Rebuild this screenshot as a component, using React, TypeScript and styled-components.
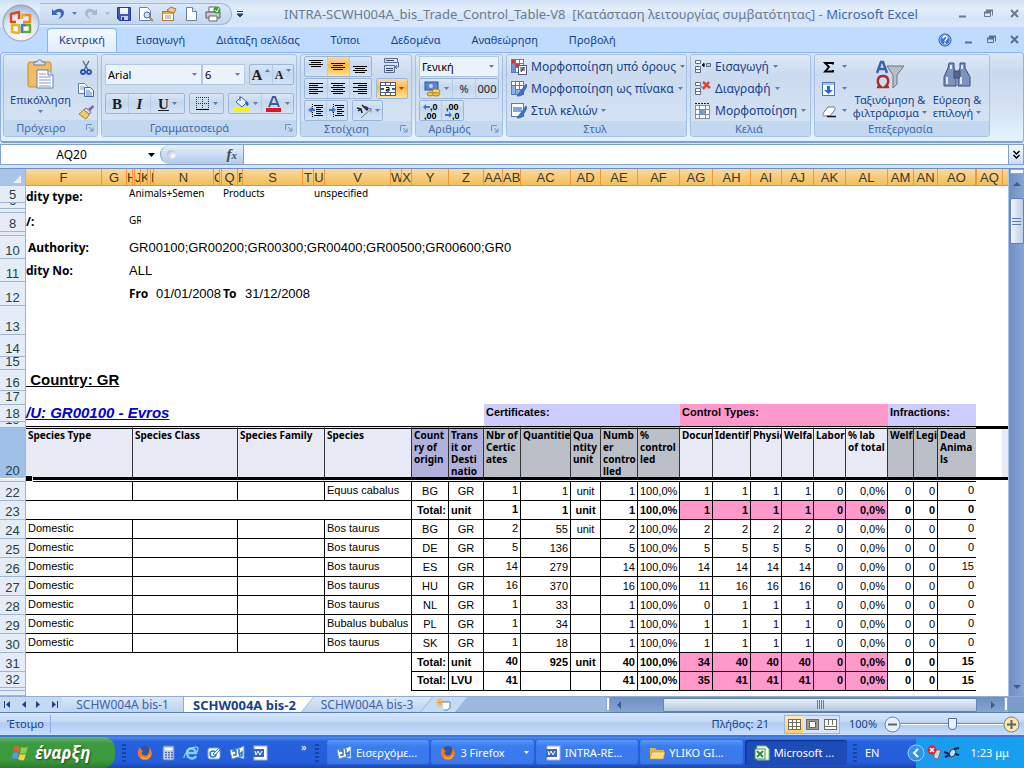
import React from "react";
import styled, { createGlobalStyle, css } from "styled-components";

const UI = `"Noto Sans", "Open Sans", sans-serif`;
const SHEET = `"Liberation Sans", Arial, sans-serif`;

const Global = createGlobalStyle`
  * { box-sizing: border-box; }
  body { margin: 0; background: #fff; font-family: ${UI}; font-size: 12px; overflow-x: hidden; }
  button { font: inherit; color: inherit; border: 0; padding: 0; margin: 0; background: none; }
  input, select { font: inherit; color: inherit; margin: 0; border-radius: 0; }
  svg { display: block; flex: none; }
`;

const Page = styled.div`
  display: flex;
  flex-direction: column;
  position: relative;
`;

/* ---------- title bar ---------- */

const TitleBar = styled.header`
  display: flex;
  align-items: center;
  height: 27px;
  padding: 0 2px 0 40px;
  background: linear-gradient(#cfe0f5, #e3eefb 30%, #d3e3f7 70%, #dcebfb);
  color: #3c66a8;
`;
const OfficeButton = styled.button`
  position: absolute;
  z-index: 2;
  left: 2px;
  top: 4px;
  width: 38px;
  height: 38px;
`;
const QuickBar = styled.div`
  display: flex;
  flex: none;
  align-items: center;
  gap: 7px;
  width: 192px;
  height: 22px;
  padding-left: 11px;
  border: 1px solid #9db8dc;
  border-left: 0;
  border-radius: 0 11px 11px 0;
  background: linear-gradient(#dbe8f8, #c4d7ef);
`;
const QuickButton = styled.button`
  display: flex;
  align-items: center;
  justify-content: center;
  height: 18px;
`;
const TitleText = styled.h1`
  flex: 1;
  min-width: 0;
  margin: 0;
  font-size: 13px;
  line-height: 20px;
  font-weight: 400;
  text-align: center;
  white-space: pre;
  color: #6c7a92;
  overflow: hidden;
`;
const AppName = styled.span`
  color: #3f69ab;
`;
const WindowButtons = styled.div`
  display: flex;
  gap: 10px;
`;
const WinButton = styled.button`
  display: grid;
  place-items: center;
  width: 16px;
  height: 16px;
`;

/* ---------- ribbon tabs ---------- */

const TabBar = styled.nav`
  display: flex;
  align-items: flex-end;
  justify-content: space-between;
  height: 25px;
  padding: 0 2px 0 47px;
  background: #bfdbff;
`;
const TabList = styled.div`
  display: flex;
  gap: 7px;
`;
const Tab = styled.button<{ $active?: boolean }>`
  height: 24px;
  padding: 0 11px 2px;
  border: 1px solid transparent;
  border-bottom: 0;
  border-radius: 4px 4px 0 0;
  font-size: 11px;
  line-height: 20px;
  color: #15428b;
  ${(p) =>
    p.$active &&
    css`
      border-color: #8db2e3;
      background: linear-gradient(#f4f9ff, #e1ecfa);
    `}
`;
const TabTools = styled.div`
  display: flex;
  align-items: center;
  gap: 7px;
  height: 25px;
`;

/* ---------- ribbon ---------- */

const Ribbon = styled.section`
  display: flex;
  gap: 3px;
  height: 91px;
  padding: 1px 2px 4px;
  border: 1px solid #8db2e3;
  border-bottom: 2px solid #7ea1d0;
  border-radius: 3px;
  background: linear-gradient(#dbe6f4, #c9d9ed 22%, #d3e1f2 60%, #e3f4ff);
`;
const Group = styled.div<{ $w: number }>`
  display: flex;
  flex-direction: column;
  flex: none;
  width: ${(p) => p.$w}px;
  border: 1px solid #a4c0e4;
  border-radius: 3px;
  background: linear-gradient(#dee9f6, #cbdaee 25%, #d8e5f5);
  overflow: hidden;
`;
const GroupBody = styled.div`
  display: flex;
  flex: 1;
  gap: 4px;
  padding: 1px 3px 0;
`;
const GroupLabel = styled.div`
  display: flex;
  align-items: center;
  gap: 8px;
  height: 16px;
  padding-right: 3px;
  background: #c2d8f1;
  font-size: 11px;
  line-height: 16px;
  color: #3e6aaa;
`;
const GroupName = styled.span`
  flex: 1;
  text-align: center;
`;
const Stack = styled.div<{ $gap?: number; $top?: number; $w?: number }>`
  display: flex;
  flex-direction: column;
  gap: ${(p) => p.$gap ?? 1}px;
  padding-top: ${(p) => p.$top ?? 0}px;
  ${(p) => p.$w && `width: ${p.$w}px;`}
`;
const Line = styled.div<{ $gap?: number }>`
  display: flex;
  gap: ${(p) => p.$gap ?? 4}px;
`;
const ButtonSet = styled.div`
  display: flex;
  height: 21px;
  border: 1px solid #9ab6dc;
  border-radius: 2px;
  background: linear-gradient(#d9e6f5, #c6d8ee 45%, #d3e2f3);
`;
const Tool = styled.button<{ $w?: number; $on?: boolean }>`
  display: flex;
  align-items: center;
  justify-content: center;
  gap: 3px;
  width: ${(p) => p.$w ?? 22}px;
  height: 19px;
  color: #1a1d26;
  font-size: 11px;
  ${(p) => p.$on && "background: linear-gradient(#fdd99b, #ffb74c 45%, #ffe58a);"}
  & + & {
    border-left: 1px solid #b5cbe7;
  }
`;
const Letter = styled.span<{ $size?: number; $italic?: boolean; $under?: boolean }>`
  font-family: "Liberation Serif", serif;
  font-weight: 700;
  font-size: ${(p) => p.$size ?? 15}px;
  line-height: 18px;
  ${(p) => p.$italic && "font-style: italic;"}
  ${(p) => p.$under && "text-decoration: underline;"}
`;
const SizeMark = styled.span`
  align-self: flex-start;
  padding-top: 4px;
`;
const BigTool = styled.button<{ $w: number }>`
  display: flex;
  flex-direction: column;
  align-items: center;
  width: ${(p) => p.$w}px;
  padding-top: 3px;
  font-size: 11px;
  line-height: 13px;
  color: #15428b;
  white-space: nowrap;
`;
const BigText = styled.span`
  padding: 3px 0 0;
`;
const CaretPad = styled.span`
  padding-top: 4px;
`;
const TextTool = styled.button`
  display: flex;
  align-items: center;
  gap: 4px;
  height: 21px;
  font-size: 12px;
  line-height: 20px;
  color: #15428b;
  white-space: nowrap;
`;
const SmallTool = styled.button`
  display: flex;
  align-items: center;
  gap: 6px;
  height: 21px;
  padding-left: 4px;
`;
const SelectBox = styled.label<{ $w: number }>`
  display: grid;
  align-items: center;
  width: ${(p) => p.$w}px;
  height: 21px;
  border: 1px solid #b3c9e6;
  background: #eaf2fb;
  & > * {
    grid-area: 1 / 1;
  }
  & > svg {
    justify-self: end;
    margin-right: 4px;
    pointer-events: none;
  }
`;
const Select = styled.select`
  appearance: none;
  width: 100%;
  height: 19px;
  padding: 0 2px;
  border: 0;
  background: none;
  font-size: 11px;
  line-height: 18px;
  color: #000;
`;

/* ---------- formula bar ---------- */

const FormulaBar = styled.div`
  display: flex;
  height: 26px;
  padding: 1px 0 3px;
  border-bottom: 1px solid #6a8fc5;
  background: #d5e4f6;
`;
const NameBox = styled.input`
  width: 142px;
  border: 1px solid #7f9fcc;
  border-right: 0;
  background: #fff;
  text-align: center;
  font-size: 12px;
  padding: 0;
`;
const NameArrow = styled.button`
  display: grid;
  place-items: center;
  width: 18px;
  border: solid #7f9fcc;
  border-width: 1px 0;
  background: #fff;
`;
const FunctionPill = styled.div`
  display: flex;
  align-items: center;
  justify-content: space-between;
  width: 84px;
  padding: 0 6px;
  border: solid #7f9fcc;
  border-width: 0 1px;
  border-radius: 11px 0 0 11px;
  background: linear-gradient(#e6effa, #b3caea);
`;
const PillDot = styled.span`
  width: 9px;
  height: 9px;
  border-radius: 5px;
  background: radial-gradient(circle at 6px 6px, #fff, #9ab0d0);
`;
const FxButton = styled.button`
  font-family: "Liberation Serif", serif;
  font-style: italic;
  font-weight: 700;
  font-size: 15px;
  line-height: 18px;
  color: #444b58;
  & > small {
    font-size: 11px;
  }
`;
const PillWrap = styled.div`
  display: flex;
  border: solid #7f9fcc;
  border-width: 1px 0;
  background: #fff;
`;
const FormulaInput = styled.input`
  flex: 1;
  min-width: 0;
  border: solid #7f9fcc;
  border-width: 1px 0;
  background: #fff;
`;
const ExpandButton = styled.button`
  display: grid;
  place-items: center;
  width: 16px;
  border: 1px solid #7f9fcc;
  background: linear-gradient(#f4f9ff, #c9dcf4);
`;

/* ---------- work sheet ---------- */

const Workbook = styled.main`
  display: flex;
`;
const Grid = styled.div`
  flex: 1;
  min-width: 0;
  overflow: hidden;
`;
const ColumnHeads = styled.div`
  display: flex;
  height: 17px;
  background: linear-gradient(#f9d99f, #f4bd5b);
  border-bottom: 1px solid #ef8f35;
`;
const SelectAll = styled.button`
  display: flex;
  align-items: flex-end;
  justify-content: flex-end;
  flex: none;
  width: 26px;
  height: 17px;
  padding: 0 4px 3px 0;
  border-right: 1px solid #9eb6ce;
  background: #a9c4e9;
`;
const ColumnHead = styled.div<{ $w: number }>`
  display: flex;
  flex: none;
  justify-content: safe center;
  width: ${(p) => p.$w}px;
  border-right: 1px solid #f29536;
  overflow: hidden;
  font-family: ${SHEET};
  font-size: 13px;
  line-height: 17px;
  color: #3d3822;
`;
const SheetArea = styled.div`
  display: flex;
`;
const RowHeads = styled.div`
  flex: none;
  width: 26px;
  border-right: 1px solid #9eb6ce;
  background: #e4ecf7;
`;
const RowHead = styled.div<{ $h: number; $on?: boolean }>`
  display: flex;
  align-items: flex-end;
  justify-content: center;
  height: ${(p) => p.$h}px;
  border-bottom: 1px solid ${(p) => (p.$on ? "#fff" : "#9eb6ce")};
  background: ${(p) => (p.$on ? "#9fc0e8" : "none")};
  overflow: hidden;
  font-family: ${SHEET};
  font-size: 13px;
  line-height: 14px;
  color: #27413e;
`;
const Cells = styled.div`
  flex: 1;
  min-width: 0;
`;
const NoteRow = styled.div<{ $h: number }>`
  display: flex;
  align-items: center;
  height: ${(p) => p.$h}px;
`;
const NoteLabel = styled.div<{ $indent?: number }>`
  flex: none;
  width: 103px;
  padding-left: ${(p) => p.$indent ?? 0}px;
  overflow: hidden;
  white-space: nowrap;
  font-weight: 700;
  font-size: 12px;
  line-height: 18px;
`;
const NoteValue = styled.div<{ $w?: number; $small?: boolean; $bold?: boolean }>`
  flex: none;
  ${(p) => p.$w && `width: ${p.$w}px;`}
  overflow: hidden;
  white-space: nowrap;
  ${(p) =>
    p.$small
      ? `align-self: flex-start; font-size: 10px; line-height: 14px;`
      : `font-size: 13px; line-height: 18px; font-family: ${SHEET};`}
  ${(p) => p.$bold && `font-weight: 700; font-family: ${UI}; font-size: 12px;`}
`;
const Gap = styled.div<{ $h: number }>`
  height: ${(p) => p.$h}px;
`;
const CountryTitle = styled.h2`
  margin: 0;
  height: 20px;
  white-space: pre;
  font: 700 15px/20px ${SHEET};
  text-decoration: underline;
`;
const BandRow = styled.div`
  display: flex;
  height: 22px;
`;
const UnitCell = styled.div`
  flex: none;
  width: 458px;
`;
const UnitLink = styled.a`
  font: italic 700 15px/18px ${SHEET};
  color: #0000d8;
  text-decoration: underline;
`;
const Band = styled.div<{ $w: number; $pink?: boolean }>`
  flex: none;
  width: ${(p) => p.$w}px;
  padding-left: 2px;
  background: ${(p) => (p.$pink ? "#ff99cc" : "#ccccff")};
  font: 700 11px/16px ${SHEET};
`;
const TableLine = styled.div`
  display: flex;
  position: relative;
`;
const FillHandle = styled.span`
  position: absolute;
  left: 0;
  top: 49px;
  width: 7px;
  height: 7px;
  border: solid #fff;
  border-width: 1px 1px 1px 0;
  background: #000;
`;
const DataTable = styled.table`
  flex: none;
  width: 950px;
  table-layout: fixed;
  border-collapse: separate;
  border-spacing: 0;
`;
const HeadCell = styled.th<{ $tone: string }>`
  height: 54px;
  padding: 0 0 0 2px;
  border-top: 3px double #000;
  border-bottom: 3px solid #000;
  border-right: 1px solid #333;
  background: ${(p) => p.$tone};
  vertical-align: top;
  text-align: left;
  white-space: pre;
  overflow: hidden;
  font-weight: 700;
  font-size: 10px;
  line-height: 12px;
  &:last-child {
    border-right: 0;
  }
`;
const ThinCell = styled.td`
  height: 2px;
  padding: 0;
  border-bottom: 1px solid #000;
`;
type Align = "left" | "center" | "right";
const Cell = styled.td<{ $align?: Align; $bold?: boolean; $pink?: boolean; $raise?: boolean; $open?: boolean }>`
  height: 19px;
  padding: ${(p) => (p.$raise ? "0 2px 2px" : "0 2px")};
  border-right: 1px solid #000;
  border-bottom: ${(p) => (p.$open ? "0" : "1px solid #000")};
  background: ${(p) => (p.$pink ? "#ff99cc" : "#fff")};
  text-align: ${(p) => p.$align ?? "right"};
  font: ${(p) => (p.$bold ? 700 : 400)} 11px/16px ${SHEET};
  white-space: nowrap;
  &:last-child {
    border-right: 0;
  }
`;
const Beyond = styled.div`
  flex: 1;
  height: 54px;
  border: solid #000;
  border-width: 3px 0;
  background: linear-gradient(90deg, #fff 26px, #e8ebf5 26px);
`;
const VScroll = styled.div`
  display: flex;
  flex: none;
  flex-direction: column;
  align-items: center;
  width: 16px;
  border-left: 1px solid #a9c4e9;
  background: linear-gradient(90deg, #6d8fc2, #86a5d2);
`;
const Splitter = styled.span<{ $tall?: boolean }>`
  flex: none;
  width: ${(p) => (p.$tall ? 4 : 14)}px;
  height: ${(p) => (p.$tall ? 14 : 5)}px;
  border: 1px solid #8aa7d4;
  background: #f4f9ff;
`;
const VThumb = styled.div`
  display: grid;
  place-items: center;
  width: 14px;
  height: 46px;
  margin: 5px 0 auto;
  border: 1px solid #6482b3;
  border-radius: 2px;
  background: linear-gradient(90deg, #f0f5fc, #bccde6);
`;
const ArrowPad = styled.span`
  padding: 6px 0 5px;
`;

/* ---------- sheet tabs ---------- */

const SheetBar = styled.div`
  display: flex;
  align-items: stretch;
  height: 16px;
  border-top: 1px solid #8fabd6;
  background: #9db8de;
`;
const SheetNav = styled.div`
  display: flex;
  flex: none;
  align-items: center;
  justify-content: space-around;
  width: 62px;
  background: #c5d9f3;
`;
const SheetTab = styled.button<{ $w: number; $active?: boolean; $slant?: boolean }>`
  flex: none;
  width: ${(p) => p.$w}px;
  font-size: 12px;
  line-height: 14px;
  color: #3c63a5;
  background: linear-gradient(#dbe8f8, #bcd2f0);
  border-right: 1px solid #8fabd6;
  ${(p) =>
    p.$slant &&
    css`
      margin-left: -11px;
      border: 0;
      clip-path: polygon(12px 0, 100% 0, calc(100% - 12px) 100%, 0 100%);
    `}
  ${(p) =>
    p.$active &&
    css`
      padding-right: 8px;
      border: 0;
      font-size: 13px;
      color: #15428b;
      font-weight: 700;
      background: #fff;
      clip-path: polygon(0 0, 100% 0, calc(100% - 12px) 100%, 0 100%);
    `}
`;
const NewTab = styled.button`
  display: grid;
  place-items: center;
  flex: none;
  width: 46px;
  margin-left: -11px;
  background: #c7daf4;
  clip-path: polygon(12px 0, 100% 0, calc(100% - 12px) 100%, 0 100%);
`;
const TabSpace = styled.div`
  flex: 1;
`;
const HScroll = styled.div`
  display: flex;
  flex: none;
  align-items: center;
  width: 394px;
  padding-left: 5px;
  background: linear-gradient(#6d8fc2, #86a5d2);
`;
const HThumb = styled.div`
  display: grid;
  place-items: center;
  width: 314px;
  height: 14px;
  margin: 0 12px 0 40px;
  border: 1px solid #6482b3;
  border-radius: 2px;
  background: linear-gradient(#e8eff9, #b4c7e2);
`;
const ScrollCorner = styled.div`
  width: 16px;
  background: #7c9ccd;
`;

/* ---------- status bar ---------- */

const StatusBar = styled.footer`
  display: flex;
  align-items: center;
  height: 23px;
  padding: 0 4px 0 7px;
  border-top: 1px solid #567db0;
  background: linear-gradient(#d7e6f9, #c3d9f7 40%, #b0cbef 45%, #c9defa);
  font-size: 11px;
  line-height: 18px;
  color: #15428b;
`;
const ReadyText = styled.span`
  width: 44px;
  border-right: 1px solid #8fb0de;
`;
const CountText = styled.span`
  flex: 1;
  padding-right: 9px;
  text-align: right;
`;
const ViewButtons = styled.div`
  display: flex;
  margin: 0 9px 0 6px;
  border: 1px solid #9ab6dc;
`;
const ViewButton = styled.button<{ $on?: boolean }>`
  display: grid;
  place-items: center;
  width: 18px;
  height: 17px;
  background: ${(p) => (p.$on ? "linear-gradient(#ffe9b5, #ffcb66)" : "#d5e4f7")};
`;
const RoundButton = styled.button`
  display: grid;
  place-items: center;
`;
const Zoom = styled.input`
  appearance: none;
  width: 102px;
  height: 18px;
  background: linear-gradient(#0000 8px, #6f8fbf 8px, #6f8fbf 9px, #fff 9px, #fff 10px, #0000 10px);
  &::-webkit-slider-thumb {
    appearance: none;
    width: 9px;
    height: 12px;
    border: 1px solid #4f6f9f;
    border-radius: 1px 1px 5px 5px;
    background: #e8f0fb;
  }
`;
const ZoomText = styled.span`
  width: 35px;
`;

/* ---------- task bar ---------- */

const TaskBar = styled.footer`
  display: flex;
  align-items: stretch;
  height: 33px;
  border-top: 2px solid #3a78e0;
  background: linear-gradient(#4a8cf2, #2760dc 15%, #245edb 80%, #1c47b4);
  color: #fff;
  font-size: 11px;
  line-height: 16px;
`;
const StartButton = styled.button`
  display: flex;
  flex: none;
  align-items: center;
  gap: 6px;
  width: 115px;
  padding-left: 11px;
  border-radius: 0 12px 12px 0;
  background: linear-gradient(#67b767, #3f9a42 20%, #3a9a3c 75%, #2b7a2e);
  font-style: italic;
  font-weight: 700;
  font-size: 17px;
  line-height: 24px;
  text-shadow: 1px 1px 2px #1c4a1c;
`;
const Grip = styled.span`
  flex: none;
  align-self: center;
  width: 4px;
  height: 18px;
  background: repeating-linear-gradient(#1a45a8 0 2px, #0000 2px 4px);
`;
const Gutter = styled.div`
  display: flex;
  justify-content: flex-end;
  width: 14px;
  padding-right: 3px;
`;
const QuickLaunch = styled.div`
  display: flex;
  flex: none;
  align-items: center;
  gap: 7px;
  width: 186px;
  padding-left: 8px;
`;
const QuickMore = styled.span`
  align-self: flex-start;
  margin: 2px 0 0 26px;
`;
const TaskList = styled.div`
  display: flex;
  flex: 1;
  align-items: center;
  gap: 2px;
  padding: 1px 6px 1px 8px;
`;
const TaskButton = styled.button<{ $on?: boolean }>`
  display: flex;
  flex: 1;
  align-items: center;
  gap: 4px;
  min-width: 0;
  height: 25px;
  padding: 0 5px 0 9px;
  border-radius: 3px;
  white-space: nowrap;
  text-align: left;
  background: ${(p) => (p.$on ? "#1d4cb8" : "linear-gradient(#5a97f7, #3b7cf0 25%, #3a78ea)")};
  box-shadow: inset ${(p) => (p.$on ? "1px 1px 2px #0f2f80" : "0 -1px 1px #2a5fd0")};
`;
const TaskText = styled.span`
  flex: 1;
`;
const Language = styled.span`
  align-self: center;
  width: 47px;
  padding-left: 8px;
`;
const Tray = styled.div`
  display: flex;
  align-items: center;
  gap: 2px;
  width: 120px;
  padding: 0 15px 0 3px;
  background: linear-gradient(90deg, #0000 12px, #1b9bee 12px, #17a0ef);
`;
const Clock = styled.time`
  flex: 1;
  text-align: right;
  white-space: nowrap;
`;

/* ---------- drawings ---------- */

const Caret = ({ c = "#5a7eb4", up }: { c?: string; up?: boolean }) => (
  <svg width="5" height="3" viewBox="0 0 5 3">
    <path d={up ? "M0 3h5L2.500 0z" : "M0 0h5L2.500 3z"} fill={c} />
  </svg>
);
const Arrow = ({ d, c = "#3b5c94" }: { d: "up" | "down" | "left" | "right"; c?: string }) => (
  <svg width="8" height="8" viewBox="0 0 8 8">
    <path d={{ up: "M0 6L4 2l4 4z", down: "M0 2l4 4 4-4z", left: "M6 0v8L2 4z", right: "M2 0v8l4-4z" }[d]} fill={c} />
  </svg>
);
const Launcher = () => (
  <svg width="8" height="8" viewBox="0 0 8 8" fill="none" stroke="#6d90c4">
    <path d="M.5 6V.5H6M3 3l4 4M7 3.500V7H3.500" />
  </svg>
);
const Lines = ({ rows, y }: { rows: number[][]; y: number }) => (
  <svg width="15" height="15" viewBox="0 0 15 15">
    {rows.map(([x, w], i) => (
      <rect key={i} x={x} y={y + i * 2} width={w} height="1" fill="#000" />
    ))}
  </svg>
);
const Svg = ({ s = 16, w, children }: { s?: number; w?: number; children: React.ReactNode }) => (
  <svg width={w ?? s} height={s} viewBox={`0 0 ${w ?? s} ${s}`}>
    {children}
  </svg>
);

const OfficeLogo = () => (
  <svg width="38" height="38" viewBox="0 0 38 38">
    <defs>
      <radialGradient id="orb" cx="50%" cy="75%" r="75%">
        <stop offset="0" stopColor="#fff" />
        <stop offset="0.600" stopColor="#dfe6f0" />
        <stop offset="1" stopColor="#9fb2cf" />
      </radialGradient>
    </defs>
    <circle cx="19" cy="19" r="18" fill="url(#orb)" stroke="#8b9fc0" />
    <g fill="none" strokeWidth="2.500" strokeLinejoin="round">
      <path d="M14 18H9v-8l8-2v7" stroke="#d8481b" />
      <path d="M20 11h8v7h-7" stroke="#ee8a1d" />
      <path d="M17 21v8l-7-1v-7z" stroke="#e8b41f" />
      <path d="M21 21h7v7h-8v-6" stroke="#6aa83a" />
      <path d="M20 15v-4l3 0" stroke="#f2a93b" />
      <path d="M20 29v-8h4" stroke="#3f7dc8" />
    </g>
  </svg>
);
const Undo = ({ c, flip }: { c: string; flip?: boolean }) => (
  <Svg s={14}>
    <g transform={flip ? "matrix(-1 0 0 1 14 0)" : undefined}>
      <path d="M1 2v6h6L5 6c3-2 5-1 5 1 0 2-1 3-3 5 4-1 6-4 6-6 0-4-5-6-10-2z" fill={c} />
    </g>
  </Svg>
);
const Save = () => (
  <Svg s={14}>
    <path d="M.5.5h13v13h-11l-2-2z" fill="#4455b8" stroke="#2b3a8c" />
    <rect x="3" y="1" width="8" height="6" fill="#f2f5fc" />
    <rect x="4" y="9" width="7" height="4" fill="#c7d0e8" />
    <rect x="5" y="10" width="2" height="3" fill="#2b3a8c" />
  </Svg>
);
const Preview = () => (
  <Svg s={16}>
    <path d="M1.500 1.500h8l3 3v10h-11z" fill="#fff" stroke="#6480ae" />
    <circle cx="9" cy="9" r="3" fill="#cfe2f8" stroke="#4b6ba0" />
    <path d="M11 11l4 4" stroke="#b98a3a" strokeWidth="2" />
  </Svg>
);
const OpenForm = () => (
  <Svg s={16}>
    <rect x="1.500" y="5.500" width="11" height="9" fill="#fff8e0" stroke="#a8803c" />
    <path d="M2 6h10v2H2z" fill="#e5a93c" />
    <path d="M4 10h6M4 12h6" stroke="#8a9cc0" />
    <path d="M6 4l4-3 5 2-2 4-4-1z" fill="#f2c887" stroke="#a8733c" />
  </Svg>
);
const NewDoc = () => (
  <Svg s={16} w={14}>
    <path d="M2.500 1.500h6l4 4v9h-10z" fill="#fff" stroke="#6480ae" />
    <path d="M8.500 1.500v4h4" fill="#dfe8f5" stroke="#6480ae" />
  </Svg>
);
const Printer = () => (
  <Svg s={16}>
    <path d="M4 1h7v5H4z" fill="#fff" stroke="#666" />
    <path d="M1 6h14v6H1z" fill="#c9ccd4" stroke="#555" />
    <path d="M4 10h8v5H4z" fill="#fff" stroke="#666" />
    <circle cx="12" cy="4" r="3.500" fill="#3e9c3a" />
    <path d="M10 4l2 2 2-4" stroke="#fff" fill="none" />
  </Svg>
);
const WinIcon = ({ k, c }: { k: "min" | "max" | "close"; c: string }) => (
  <Svg s={11}>
    {k === "min" && <path d="M2 8.500h7" stroke={c} strokeWidth="2" />}
    {k === "max" && (
      <g fill="none" stroke={c}>
        <path d="M3.500 2.500h6v5M1.500 4.500h6v4h-6z" />
        <path d="M3 2.500h7M1 4.500h7" strokeWidth="2" />
      </g>
    )}
    {k === "close" && <path d="M2 2l7 7M9 2L2 9" stroke={c} strokeWidth="2" />}
  </Svg>
);
const Help = () => (
  <Svg s={14}>
    <circle cx="7" cy="7" r="6" fill="#3b74d8" stroke="#1c4aa5" />
    <circle cx="7" cy="7" r="5" fill="none" stroke="#b5d0fa" />
    <path d="M5 5.500c0-3 4-3 4-.5C9 6.500 7 6.500 7 8.500M7 9.500v1.500" stroke="#fff" strokeWidth="1.500" fill="none" />
  </Svg>
);
const Clipboard = () => (
  <svg width="28" height="31" viewBox="0 0 28 31">
    <rect x="1" y="3" width="23" height="25" rx="2" fill="#f0bd62" stroke="#c48a35" />
    <path d="M7 5V3h3c0-3 5-3 5 0h3v3H7z" fill="#dde3ec" stroke="#6f7c92" />
    <path d="M10 11h11l5 5v13H10z" fill="#fff" stroke="#6480ae" />
    <path d="M21 11v5h5" fill="#dfe8f5" stroke="#6480ae" />
    <path d="M12 15h7M12 18h12M12 21h12M12 24h12M12 27h12" stroke="#8a9cc0" />
  </svg>
);
const Scissors = () => (
  <Svg s={16}>
    <path d="M5 1l5 9M11 1L6 10" stroke="#566f9c" strokeWidth="1.500" />
    <circle cx="5" cy="12" r="2" fill="none" stroke="#2b57b5" strokeWidth="2" />
    <circle cx="11" cy="12" r="2" fill="none" stroke="#2b57b5" strokeWidth="2" />
  </Svg>
);
const Copy = () => (
  <Svg s={16}>
    <path d="M.5 1.500h6l3 3v7h-9z" fill="#fff" stroke="#5f7fb8" />
    <path d="M2 5h5M2 7h5" stroke="#7f9bd0" />
    <path d="M6.500 5.500h6l3 3v6h-9z" fill="#eef4ff" stroke="#3f67b0" />
    <path d="M8 9h4M8 11h6M8 13h6" stroke="#5f83c8" />
  </Svg>
);
const Brush = () => (
  <Svg s={16}>
    <path d="M15 1l-5 4 2 2 4-4z" fill="#7c5bb0" />
    <path d="M8 4l5 4-5 7-7-5z" fill="#f1cf62" stroke="#a98328" />
    <path d="M8 4l5 4-2 2-5-4z" fill="#d9dde6" stroke="#777" />
  </Svg>
);
const Borders = () => (
  <Svg s={15}>
    <path d="M1 1.500h13M1 7.500h13M1.500 1v12M7.500 1v12M13.500 1v12" stroke="#333" strokeDasharray="1 1" />
    <path d="M1 13.500h13" stroke="#000" />
  </Svg>
);
const Bucket = () => (
  <Svg s={17}>
    <path d="M3 7l5-5 6 5-5 5z" fill="#e6effa" stroke="#4a6599" />
    <path d="M7 6V1" stroke="#4a6599" />
    <path d="M13 6c3 1 3 3 2 5-2 0-2-2-3-3z" fill="#3f67b0" />
    <rect x="1" y="13" width="15" height="4" fill="#fbf300" />
  </Svg>
);
const FontColor = () => (
  <Svg s={17}>
    <path d="M4 12L8 2h2l4 10M6 9h6" stroke="#3b5ea0" strokeWidth="2" fill="none" />
    <rect x="1" y="13" width="15" height="4" fill="#e8101c" />
  </Svg>
);
const Wrap = () => (
  <Svg s={17}>
    <path d="M3 3.500h8M3 11.500h7M3 13.500h7" stroke="#39445e" />
    <path d="M1.500 1.500h13v4h-13zM1.500 8.500h10v7h-10z" fill="none" stroke="#5b6d92" />
    <path d="M15.500 5v5h-3M14 8l-2 2 2 2" fill="none" stroke="#5b6d92" />
  </Svg>
);
const Merge = () => (
  <Svg s={16}>
    <rect x=".5" y="1.500" width="15" height="13" fill="#fff" stroke="#4a5d86" />
    <path d="M0 4.500h16M0 11.500h16M5.500 2v2M10.500 2v2M5.500 12v2M10.500 12v2" stroke="#4a5d86" />
    <path d="M1 8h3M12 8h3" stroke="#2458c8" strokeWidth="2" />
    <path d="M6 6.500h3v3.500H6.500V8.500H9" stroke="#000" fill="none" />
  </Svg>
);
const Indent = ({ out }: { out?: boolean }) => (
  <Svg s={16}>
    <path d="M6 2.500h9M8 4.500h7M8 6.500h5M8 8.500h7M8 10.500h5M6 12.500h9" stroke="#000" />
    <path d="M4.500 1v14" stroke="#000" strokeDasharray="1 1" />
    <path d={out ? "M4 4L0 7l4 3V8h3V6H4z" : "M3 4l4 3-4 3V8H0V6h3z"} fill="#3f74d0" />
  </Svg>
);
const Orient = () => (
  <Svg s={16}>
    <path d="M5 15L15 6M11 5.500h4v4" stroke="#7a8191" fill="none" />
    <path d="M1 5l4 1 1 4M2 8l3-2M6 2l5 5M8 5c2-2 5 0 3 2" stroke="#1d2330" strokeWidth="1.500" fill="none" />
  </Svg>
);
const Currency = () => (
  <Svg s={17}>
    <rect x="1" y="2" width="13" height="8" fill="#5b86cf" stroke="#2d55a0" />
    <circle cx="7" cy="6" r="2" fill="#c9dcf6" />
    <ellipse cx="12" cy="14" rx="4" ry="2" fill="#f4c33c" stroke="#b5821a" />
    <ellipse cx="12" cy="11" rx="4" ry="2" fill="#f9d767" stroke="#b5821a" />
    <ellipse cx="6" cy="14" rx="3" ry="2" fill="#f4c33c" stroke="#b5821a" />
  </Svg>
);
const DecimalSvg = styled.svg`
  font: 700 9px "Liberation Sans", sans-serif;
`;
const Decimal = ({ more }: { more?: boolean }) => (
  <DecimalSvg width="18" height="18" viewBox="0 0 18 18">
    <text x={more ? 8 : 2} y="8">{more ? ",0" : ",00"}</text>
    <text x={more ? 2 : 8} y="17">{more ? ",00" : ",0"}</text>
    <path d={more ? "M4 2L1 5l3 3V6h4V4H4z" : "M5 10l3 3-3 3v-2H1v-2h4z"} fill="#3f74d0" />
  </DecimalSvg>
);
const GridIcon = ({ k }: { k: "cond" | "table" | "style" }) => (
  <Svg s={17}>
    <rect x="1.500" y="1.500" width="12" height="13" fill="#fff" stroke="#5a7db8" />
    {k !== "style" && <path d="M1 5.500h13M1 9.500h13M5.500 1v14M9.500 1v14" stroke="#5a7db8" />}
    {k === "cond" && (
      <>
        <path d="M2 2h3v3H2zM6 6h3v3H6z" fill="#d8352c" />
        <path d="M2 6h3v8H2z" fill="#6f93d8" />
        <rect x="8.500" y="7.500" width="8" height="9" fill="#fff" stroke="#4a5d86" />
        <path d="M10 10h5M10 12h5M11 14l3-5" stroke="#333" />
      </>
    )}
    {k === "table" && <path d="M2 6h3v8H2zM6 10h7v4H6z" fill="#8db0e6" />}
    {k === "style" && <path d="M3 5h9v5H3z" fill="#7fa7e4" />}
    {k !== "cond" && <path d="M16 4l-6 8-3 4c4 0 6-1 6-3l4-7z" fill="#3d73cf" stroke="#26509b" strokeWidth=".7" />}
  </Svg>
);
const CellIcon = ({ k }: { k: "insert" | "delete" | "format" }) => (
  <Svg s={17}>
    {k === "format" ? (
      <>
        <rect x="1.500" y="3.500" width="14" height="13" fill="#fff" stroke="#7c8ba8" />
        <path d="M1 7.500h15M1 12.500h15M5.500 4v12M11.500 4v12" stroke="#7c8ba8" />
        <rect x="6" y="8" width="5" height="4" fill="#6c9be8" />
        <path d="M1 1.500h15" stroke="#222" strokeDasharray="2 1" />
      </>
    ) : (
      <>
        <path d="M1.500 2.500h5v3h-5zM1.500 8.500h5v3h-5zM1.500 11.500h5v3h-5z" fill="#fff" stroke="#5d6d8c" />
        {k === "insert" ? (
          <>
            <path d="M8 7h3M10 5L8 7l2 2z" fill="#222" stroke="#222" />
            <path d="M12.500 5.500h4v3h-4z" fill="#b9d0f2" stroke="#5d6d8c" />
          </>
        ) : (
          <>
            <path d="M6 7h4" stroke="#5d6d8c" />
            <path d="M9 2l7 6M15 2L9 9" stroke="#e0432c" strokeWidth="2.500" />
          </>
        )}
      </>
    )}
  </Svg>
);
const Sigma = () => (
  <Svg s={14}>
    <path d="M11 4.500V3H3l4 4-4 4.500h8V10" fill="none" stroke="#000" strokeWidth="1.800" />
  </Svg>
);
const FillDown = () => (
  <Svg s={14}>
    <rect x=".5" y=".5" width="12" height="13" fill="#fff" stroke="#4a74bd" />
    <path d="M1 1h11v2H1z" fill="#a9c6f2" />
    <path d="M5 4h3v4h3l-4.500 4L2 8h3z" fill="#2f64c8" />
  </Svg>
);
const Eraser = () => (
  <Svg s={14}>
    <path d="M6 3h6c2 0 1 3 0 4l-4 5H2c-2 0-1-2 0-4z" fill="#fff" stroke="#6b7890" />
    <path d="M5 12.500h9" stroke="#111" strokeWidth="1.500" />
  </Svg>
);
const SortFilter = () => (
  <svg width="30" height="31" viewBox="0 0 30 31">
    <path d="M12 7h17l-7 9v9l-4 4V16z" fill="#b9bdc6" stroke="#6f7583" />
    <path d="M2 14L6 3h2l4 11M4 10h6" stroke="#3b62ad" strokeWidth="2.500" fill="none" />
    <path d="M2 28h4c-5-4-4-11 2-11s7 7 2 11h4" stroke="#a8302b" strokeWidth="2.500" fill="none" />
  </svg>
);
const Binoculars = () => (
  <svg width="30" height="31" viewBox="0 0 30 31">
    <g fill="#7b94bf" stroke="#3b4f78">
      <path d="M7 4h5v5l2 5v13H2V18L6 9z" />
      <path d="M18 4h5v5l5 9v9H16V14l2-5z" />
      <rect x="12" y="12" width="6" height="7" fill="#53678f" />
    </g>
    <path d="M5 18v7M19 18v7M9 6v4M20 6v4" stroke="#dfe9fa" strokeWidth="2" />
  </svg>
);
const Firefox = () => (
  <Svg s={16}>
    <circle cx="8" cy="8" r="7" fill="#2f55a8" />
    <path d="M3 2C0 6 0 11 4 14c5 3 10 0 11-5 0-3-1-5-3-7 1 3 0 5-1 7-1 2-4 2-6 0-1-2 0-3 2-3C5 6 3 4 3 2z" fill="#f0781e" />
    <path d="M4 12c4 3 8 1 9-2" stroke="#ffc94a" fill="none" />
  </Svg>
);
const Calc = () => (
  <Svg s={16}>
    <rect x="3" y="1" width="11" height="14" rx="1" fill="#c5d6f2" stroke="#5b7fc5" />
    <path d="M5 3h7v2H5z" fill="#fff" />
    <path d="M5 7.500h8M5 10h8M5 12.500h8" stroke="#4f70b4" strokeDasharray="2 1" strokeWidth="1.500" />
  </Svg>
);
const Explorer = () => (
  <Svg s={16}>
    <path d="M13 11c-2 4-9 3-9-3s8-6 9 0H5" fill="none" stroke="#7cd0fa" strokeWidth="2.500" />
    <path d="M1 13C0 9 9 1 14 2c2 1 1 3 0 5" fill="none" stroke="#bfe8ff" />
  </Svg>
);
const Outlook = () => (
  <Svg s={16}>
    <rect x="2" y="3" width="12" height="11" rx="2" fill="#fff" stroke="#7aa6d8" />
    <circle cx="7" cy="9" r="3" fill="none" stroke="#2f79c4" strokeWidth="1.500" />
    <path d="M7 9l6-6 1 2-5 5z" fill="#fff" stroke="#2f79c4" />
  </Svg>
);
const Mail = () => (
  <Svg s={16}>
    <path d="M1 5l7-1 7-3v13l-6-2-6 2-1-4z" fill="#fff" stroke="#5b93cf" />
    <path d="M3 6h4v4H4M7 6l-2-2M10 4v5M10 11h3V7l-3 3" stroke="#2a72bd" strokeWidth="1.500" fill="none" />
  </Svg>
);
const Word = () => (
  <Svg s={16}>
    <rect x="2" y="1" width="13" height="14" fill="#fff" stroke="#9db6e3" />
    <path d="M1 4h11v8H1z" fill="#3c66bd" />
    <path d="M3 6l1 4 2-4 2 4 2-4" stroke="#fff" fill="none" />
  </Svg>
);
const Folder = () => (
  <Svg s={16}>
    <path d="M1 3h5l2 2h7v9H1z" fill="#e3b53c" />
    <path d="M1 14l2-7h13l-2 7z" fill="#fbe28a" stroke="#c8962c" strokeWidth=".7" />
  </Svg>
);
const Excel = () => (
  <Svg s={16}>
    <path d="M3 1h9l3 3v11H3z" fill="#eef8ee" stroke="#8bb88d" />
    <rect x="1" y="4" width="10" height="10" fill="#fff" stroke="#3b9a47" />
    <path d="M3 6l6 6M9 6l-6 6" stroke="#2d8a3a" strokeWidth="2" />
  </Svg>
);
const Flag = () => (
  <svg width="18" height="18" viewBox="0 0 18 18">
    <path d="M3 3c2-1 4-1 6 0L8 8C6 7 4 7 2 8z" fill="#ee5a2b" />
    <path d="M10 3c2 1 4 1 7 0l-2 6c-2 1-4 1-6 0z" fill="#8fcf4a" />
    <path d="M2 9c2-1 4-1 6 0l-2 6c-1-1-3-1-5 0z" fill="#5b95ee" />
    <path d="M9 10c2 1 4 1 6 0l-2 6c-2 1-4 0-6-1z" fill="#fbd23c" />
  </svg>
);
const TrayArrow = () => (
  <Svg s={18}>
    <circle cx="9" cy="9" r="8" fill="#2f92ee" stroke="#9ad0fa" />
    <path d="M11 5L7 9l4 4" stroke="#fff" strokeWidth="2" fill="none" />
  </Svg>
);
const TrayAlert = () => (
  <Svg s={15}>
    <path d="M7 5h7l-3 9-4-1z" fill="#cfd6dc" stroke="#66707c" />
    <circle cx="5" cy="5" r="4.500" fill="#d8242b" />
    <path d="M3 3l4 4M7 3L3 7" stroke="#fff" strokeWidth="1.500" />
  </Svg>
);
const TrayNet = () => (
  <Svg s={16}>
    <path d="M5 9l2-4 3-1 2 3-2 4-3 1z" fill="#c9d8ef" stroke="#27406e" />
    <path d="M0 7l5 2M1 12l5-2M10 4l5-1M11 9l4 1" stroke="#0e2350" strokeWidth="2" />
  </Svg>
);
const SheetArrow = ({ end, right }: { end?: boolean; right?: boolean }) => (
  <Svg s={7}>
    <g transform={right ? "matrix(-1 0 0 1 7 0)" : undefined} fill="#1c4587">
      <path d="M6 0v7L2 3.500z" />
      {end && <path d="M0 0h1v7H0z" />}
    </g>
  </Svg>
);
const NewSheet = () => (
  <Svg s={14} w={16}>
    <path d="M6 4h8v6l-3 2H8" fill="#fff" stroke="#5a7db8" />
    <path d="M4 0v9M0 4.500h8M1 1.500l6 6M7 1.500l-6 6" stroke="#eda02d" />
  </Svg>
);
const ViewIcon = ({ k }: { k: number }) => (
  <Svg s={13}>
    <rect x=".5" y="1.500" width="12" height="10" fill={k === 1 ? "#9a9a9a" : "#fff"} stroke="#6c6c60" />
    {k === 0 && <path d="M1 4.500h12M1 8.500h12M4.500 2v9M8.500 2v9" stroke="#6c6c60" />}
    {k === 1 && <path d="M3.500 3.500h6v6h-6z" fill="#fff" stroke="#666" />}
    {k === 2 && <path d="M4.500 2v5M8.500 2v5M1 8.500h12" stroke="#6c6c60" />}
  </Svg>
);
const Round = ({ plus }: { plus?: boolean }) => (
  <Svg s={17}>
    <circle cx="8.500" cy="8.500" r="7.500" fill={plus ? "#fbe7a6" : "#e6effa"} stroke="#6d7f9f" />
    <path d={plus ? "M4 8.500h9M8.500 4v9" : "M4 8.500h9"} stroke="#5a6270" strokeWidth="2" />
  </Svg>
);

/* ---------- data ---------- */

const columns: [string, number][] = [
  ["F", 76], ["G", 25], ["H", 6], ["", 2], ["J", 6], ["K", 7], ["", 3], ["M", 3], ["N", 60], ["O", 6], ["", 2],
  ["Q", 16], ["R", 5], ["S", 60], ["T", 11], ["U", 11], ["V", 66], ["W", 11], ["X", 10], ["Y", 37], ["Z", 35],
  ["AA", 19], ["AB", 18], ["AC", 50], ["AD", 30], ["AE", 37], ["AF", 42], ["AG", 33], ["AH", 38], ["AI", 31],
  ["AJ", 32], ["AK", 32], ["AL", 42], ["AM", 26], ["AN", 24], ["AO", 38], ["", 1], ["AQ", 26],
];

const rowHeads: [string, number][] = [
  ["5", 17], ["6", 6], ["", 4], ["8", 19], ["", 4], ["10", 23], ["11", 23], ["12", 24], ["13", 29], ["14", 22],
  ["15", 13], ["16", 21], ["17", 14], ["18", 17], ["19", 6], ["20", 51], ["", 3], ["22", 19], ["23", 19], ["24", 19],
  ["25", 19], ["26", 19], ["27", 19], ["28", 19], ["29", 19], ["30", 19], ["31", 19], ["32", 16], ["", 3], ["", 5],
];

const LIGHT = "#e8ebf5";
const VIOLET = "#b0b1dc";
const GREY = "#bbbfc8";
const heads: [string, number, string][] = [
  ["Species Type", 107, LIGHT], ["Species Class", 105, LIGHT], ["Species Family", 87, LIGHT], ["Species", 87, LIGHT],
  ["Count\nry of\norigin", 37, VIOLET], ["Trans\nit or\nDesti\nnatio", 35, VIOLET], ["Nbr of\nCertic\nates", 37, GREY],
  ["Quantities", 50, GREY], ["Qua\nntity\nunit", 30, GREY], ["Numb\ner\ncontro\nlled", 37, GREY],
  ["%\ncontrol\nled", 42, GREY], ["Docum", 33, LIGHT], ["Identif", 38, LIGHT], ["Physic", 31, LIGHT],
  ["Welfa", 32, LIGHT], ["Labor", 32, LIGHT], ["% lab\nof total", 42, LIGHT], ["Welfa", 26, GREY],
  ["Legis", 24, GREY], ["Dead\nAnima\nls", 38, GREY],
];

const P = "100,0%";
const Z = "0,0%";
type Row = { kind?: string; species?: string; total?: "mid" | "end"; cells: string[] };
const rows: Row[] = [
  { kind: "", species: "Equus cabalus", cells: ["BG", "GR", "1", "1", "unit", "1", P, "1", "1", "1", "1", "0", Z, "0", "0", "0"] },
  { total: "mid", cells: ["Total:", "unit", "1", "1", "unit", "1", P, "1", "1", "1", "1", "0", Z, "0", "0", "0"] },
  { kind: "Domestic", species: "Bos taurus", cells: ["BG", "GR", "2", "55", "unit", "2", P, "2", "2", "2", "2", "0", Z, "0", "0", "0"] },
  { kind: "Domestic", species: "Bos taurus", cells: ["DE", "GR", "5", "136", "", "5", P, "5", "5", "5", "5", "0", Z, "0", "0", "0"] },
  { kind: "Domestic", species: "Bos taurus", cells: ["ES", "GR", "14", "279", "", "14", P, "14", "14", "14", "14", "0", Z, "0", "0", "15"] },
  { kind: "Domestic", species: "Bos taurus", cells: ["HU", "GR", "16", "370", "", "16", P, "11", "16", "16", "16", "0", Z, "0", "0", "0"] },
  { kind: "Domestic", species: "Bos taurus", cells: ["NL", "GR", "1", "33", "", "1", P, "0", "1", "1", "1", "0", Z, "0", "0", "0"] },
  { kind: "Domestic", species: "Bubalus bubalus", cells: ["PL", "GR", "1", "34", "", "1", P, "1", "1", "1", "1", "0", Z, "0", "0", "0"] },
  { kind: "Domestic", species: "Bos taurus", cells: ["SK", "GR", "1", "18", "", "1", P, "1", "1", "1", "1", "0", Z, "0", "0", "0"] },
  { total: "end", cells: ["Total:", "unit", "40", "925", "unit", "40", P, "34", "40", "40", "40", "0", Z, "0", "0", "15"] },
  { total: "end", cells: ["Total:", "LVU", "41", "", "", "41", P, "35", "41", "41", "41", "0", Z, "0", "0", "15"] },
];

const alignOf = (i: number, total: boolean): Align => {
  if (i === 0) return total ? "right" : "center";
  if (i === 1) return total ? "left" : "center";
  return i === 4 ? "center" : "right";
};

const lineSets = {
  narrow: [[0, 14], [2, 10], [0, 14], [2, 10]],
  left: [[0, 14], [0, 9], [0, 14], [0, 9], [0, 14], [0, 9]],
  center: [[0, 14], [2, 10], [0, 14], [2, 10], [0, 14], [2, 10]],
  right: [[0, 14], [5, 9], [0, 14], [5, 9], [0, 14], [5, 9]],
};

const CaretLine = styled.span`
  display: flex;
  align-items: center;
  gap: 3px;
`;
const TextCaret = ({ children }: { children: React.ReactNode }) => (
  <CaretLine>{children}<Caret /></CaretLine>
);
const PlainButton = styled.button`
  width: 16px;
  height: 16px;
`;
const SmallButton = ({ label, children }: { label: string; children: React.ReactNode }) => (
  <PlainButton aria-label={label}>{children}</PlainButton>
);

const RibbonGroup = ({ w, name, more, children }: { w: number; name: string; more?: boolean; children: React.ReactNode }) => (
  <Group $w={w}>
    <GroupBody>{children}</GroupBody>
    <GroupLabel>
      <GroupName>{name}</GroupName>
      {more && <Launcher />}
    </GroupLabel>
  </Group>
);

export default function App() {
  return (
    <Page>
      <Global />
      <OfficeButton aria-label="Office"><OfficeLogo /></OfficeButton>
      <TitleBar>
        <QuickBar>
          <QuickButton aria-label="Undo"><Undo c="#3567c0" /></QuickButton>
          <Caret />
          <QuickButton aria-label="Redo"><Undo c="#a9b8d0" flip /></QuickButton>
          <Caret c="#a9b8d0" />
          <QuickButton aria-label="Save"><Save /></QuickButton>
          <QuickButton aria-label="Preview"><Preview /></QuickButton>
          <QuickButton aria-label="Form"><OpenForm /></QuickButton>
          <QuickButton aria-label="New"><NewDoc /></QuickButton>
          <QuickButton aria-label="Print"><Printer /></QuickButton>
        </QuickBar>
        <WinButton aria-label="More"><Svg s={8}><path d="M1 1.500h6M1 4h6L4 7z" stroke="#23406f" fill="#23406f" /></Svg></WinButton>
        <TitleText>
          {"INTRA-SCWH004A_bis_Trade_Control_Table-V8  [Κατάσταση λειτουργίας συμβατότητας] - "}
          <AppName>Microsoft Excel</AppName>
        </TitleText>
        <WindowButtons>
          <WinButton aria-label="Minimize"><WinIcon k="min" c="#6a7890" /></WinButton>
          <WinButton aria-label="Restore"><WinIcon k="max" c="#6a7890" /></WinButton>
          <WinButton aria-label="Close"><WinIcon k="close" c="#6a7890" /></WinButton>
        </WindowButtons>
      </TitleBar>

      <TabBar>
        <TabList>
          {["Κεντρική", "Εισαγωγή", "Διάταξη σελίδας", "Τύποι", "Δεδομένα", "Αναθεώρηση", "Προβολή"].map((t, i) => (
            <Tab key={t} $active={i === 0}>{t}</Tab>
          ))}
        </TabList>
        <TabTools>
          <WinButton aria-label="Help"><Help /></WinButton>
          <WinButton aria-label="Minimize sheet"><WinIcon k="min" c="#5a6f92" /></WinButton>
          <WinButton aria-label="Restore sheet"><WinIcon k="max" c="#5a6f92" /></WinButton>
          <WinButton aria-label="Close sheet"><WinIcon k="close" c="#5a6f92" /></WinButton>
        </TabTools>
      </TabBar>

      <Ribbon>
        <RibbonGroup w={95} name="Πρόχειρο" more>
          <BigTool $w={68}>
            <Clipboard />
            <BigText>Επικόλληση</BigText>
            <CaretPad><Caret /></CaretPad>
          </BigTool>
          <Stack $gap={6} $top={4}>
            <SmallButton label="Cut"><Scissors /></SmallButton>
            <SmallButton label="Copy"><Copy /></SmallButton>
            <SmallButton label="Format painter"><Brush /></SmallButton>
          </Stack>
        </RibbonGroup>

        <RibbonGroup w={196} name="Γραμματοσειρά" more>
          <Stack $gap={8} $top={8}>
            <Line>
              <Line $gap={0}>
                <SelectBox $w={97}>
                  <Select aria-label="Font"><option>Arial</option></Select>
                  <Caret />
                </SelectBox>
                <SelectBox $w={43}>
                  <Select aria-label="Font size"><option>6</option></Select>
                  <Caret />
                </SelectBox>
              </Line>
              <ButtonSet>
                <Tool $w={22} aria-label="Grow font"><Letter $size={15}>A</Letter><SizeMark><Caret up /></SizeMark></Tool>
                <Tool $w={21} aria-label="Shrink font"><Letter $size={12}>A</Letter><SizeMark><Caret /></SizeMark></Tool>
              </ButtonSet>
            </Line>
            <Line>
              <ButtonSet>
                <Tool $w={22}><Letter>B</Letter></Tool>
                <Tool $w={22}><Letter $italic>I</Letter></Tool>
                <Tool $w={34}><Letter $under>U</Letter><Caret /></Tool>
              </ButtonSet>
              <ButtonSet>
                <Tool $w={33} aria-label="Borders"><Borders /><Caret /></Tool>
              </ButtonSet>
              <ButtonSet>
                <Tool $w={32} aria-label="Fill colour"><Bucket /><Caret /></Tool>
                <Tool $w={32} aria-label="Font colour"><FontColor /><Caret /></Tool>
              </ButtonSet>
            </Line>
          </Stack>
        </RibbonGroup>

        <RibbonGroup w={112} name="Στοίχιση" more>
          <Stack>
            <Line>
              <ButtonSet>
                <Tool aria-label="Top"><Lines rows={lineSets.narrow} y={1} /></Tool>
                <Tool aria-label="Middle" $on><Lines rows={lineSets.narrow} y={4} /></Tool>
                <Tool aria-label="Bottom"><Lines rows={lineSets.narrow} y={7} /></Tool>
              </ButtonSet>
              <Tool $w={30} aria-label="Wrap text"><Wrap /></Tool>
            </Line>
            <Line>
              <ButtonSet>
                <Tool aria-label="Left"><Lines rows={lineSets.left} y={2} /></Tool>
                <Tool aria-label="Centre"><Lines rows={lineSets.center} y={2} /></Tool>
                <Tool aria-label="Right"><Lines rows={lineSets.right} y={2} /></Tool>
              </ButtonSet>
              <ButtonSet>
                <Tool $w={30} aria-label="Merge" $on><Merge /><Caret c="#7a5a20" /></Tool>
              </ButtonSet>
            </Line>
            <Line>
              <ButtonSet>
                <Tool $w={21} aria-label="Decrease indent"><Indent out /></Tool>
                <Tool $w={21} aria-label="Increase indent"><Indent /></Tool>
              </ButtonSet>
              <ButtonSet>
                <Tool $w={29} aria-label="Orientation"><Orient /><Caret /></Tool>
              </ButtonSet>
            </Line>
          </Stack>
        </RibbonGroup>

        <RibbonGroup w={88} name="Αριθμός" more>
          <Stack>
            <SelectBox $w={80}>
              <Select aria-label="Number format"><option>Γενική</option></Select>
              <Caret />
            </SelectBox>
            <ButtonSet>
              <Tool $w={32} aria-label="Currency"><Currency /><Caret /></Tool>
              <Tool $w={23}>%</Tool>
              <Tool $w={23}>000</Tool>
            </ButtonSet>
            <Line>
              <ButtonSet>
                <Tool $w={21} aria-label="More decimals"><Decimal more /></Tool>
                <Tool $w={22} aria-label="Fewer decimals"><Decimal /></Tool>
              </ButtonSet>
            </Line>
          </Stack>
        </RibbonGroup>

        <RibbonGroup w={181} name="Στυλ">
          <Stack $w={174}>
            <TextTool><GridIcon k="cond" />Μορφοποίηση υπό όρους<Caret /></TextTool>
            <TextTool><GridIcon k="table" />Μορφοποίηση ως πίνακα<Caret /></TextTool>
            <TextTool><GridIcon k="style" />Στυλ κελιών<Caret /></TextTool>
          </Stack>
        </RibbonGroup>

        <RibbonGroup w={121} name="Κελιά">
          <Stack>
            <TextTool><CellIcon k="insert" />Εισαγωγή<Caret /></TextTool>
            <TextTool><CellIcon k="delete" />Διαγραφή<Caret /></TextTool>
            <TextTool><CellIcon k="format" />Μορφοποίηση<Caret /></TextTool>
          </Stack>
        </RibbonGroup>

        <RibbonGroup w={176} name="Επεξεργασία">
          <Stack $w={30}>
            <SmallTool aria-label="Sum"><Sigma /><Caret /></SmallTool>
            <SmallTool aria-label="Fill"><FillDown /><Caret /></SmallTool>
            <SmallTool aria-label="Clear"><Eraser /><Caret /></SmallTool>
          </Stack>
          <BigTool $w={76}>
            <SortFilter />
            <BigText>Ταξινόμηση &amp;</BigText>
            <TextCaret>φιλτράρισμα</TextCaret>
          </BigTool>
          <BigTool $w={50}>
            <Binoculars />
            <BigText>Εύρεση &amp;</BigText>
            <TextCaret>επιλογή</TextCaret>
          </BigTool>
        </RibbonGroup>
      </Ribbon>

      <FormulaBar>
        <NameBox aria-label="Name box" defaultValue="AQ20" />
        <NameArrow aria-label="Names"><Svg s={7}><path d="M0 2h7L3.500 6z" /></Svg></NameArrow>
        <PillWrap>
          <FunctionPill><PillDot /><FxButton>f<small>x</small></FxButton></FunctionPill>
        </PillWrap>
        <FormulaInput aria-label="Formula" />
        <ExpandButton aria-label="Expand"><Svg s={9}><path d="M1.500 1l3 3 3-3M1.500 5l3 3 3-3" stroke="#000" strokeWidth="1.500" fill="none" /></Svg></ExpandButton>
      </FormulaBar>

      <Workbook>
        <Grid>
          <ColumnHeads>
            <SelectAll aria-label="Select all"><Svg s={8}><path d="M8 0v8H0z" fill="#e6effb" /></Svg></SelectAll>
            {columns.map(([name, w], i) => <ColumnHead key={i} $w={w}>{name}</ColumnHead>)}
          </ColumnHeads>
          <SheetArea>
            <RowHeads>
              {rowHeads.map(([name, h], i) => <RowHead key={i} $h={h} $on={name === "20"}>{name}</RowHead>)}
            </RowHeads>
            <Cells>
              <NoteRow $h={22}>
                <NoteLabel>dity type:</NoteLabel>
                <NoteValue $small $w={94}>Animals+Semen</NoteValue>
                <NoteValue $small $w={91}>Products</NoteValue>
                <NoteValue $small>unspecified</NoteValue>
              </NoteRow>
              <NoteRow $h={28}>
                <NoteLabel>/:</NoteLabel>
                <NoteRow $h={18}><NoteValue $small $w={12}>GR</NoteValue></NoteRow>
              </NoteRow>
              <NoteRow $h={23}>
                <NoteLabel $indent={2}>Authority:</NoteLabel>
                <NoteValue>GR00100;GR00200;GR00300;GR00400;GR00500;GR00600;GR0</NoteValue>
              </NoteRow>
              <NoteRow $h={23}>
                <NoteLabel>dity No:</NoteLabel>
                <NoteValue>ALL</NoteValue>
              </NoteRow>
              <NoteRow $h={24}>
                <NoteLabel />
                <NoteValue $bold $w={27}>Fro</NoteValue>
                <NoteValue $w={67}>01/01/2008</NoteValue>
                <NoteValue $bold $w={22}>To</NoteValue>
                <NoteValue>31/12/2008</NoteValue>
              </NoteRow>
              <Gap $h={64} />
              <CountryTitle> Country: GR</CountryTitle>
              <Gap $h={14} />
              <BandRow>
                <UnitCell><UnitLink href="#evros">/U: GR00100 - Evros</UnitLink></UnitCell>
                <Band $w={196}>Certificates:</Band>
                <Band $w={208} $pink>Control Types:</Band>
                <Band $w={88}>Infractions:</Band>
              </BandRow>
              <TableLine>
                <DataTable>
                  <colgroup>{heads.map(([, w], i) => <col key={i} width={w} />)}</colgroup>
                  <thead>
                    <tr>{heads.map(([t, , tone], i) => <HeadCell key={i} $tone={tone}>{t}</HeadCell>)}</tr>
                  </thead>
                  <tbody>
                    <tr><ThinCell colSpan={20} /></tr>
                    {rows.map((r, n) => (
                      <tr key={n}>
                        {r.total ? (
                          <Cell colSpan={4} $open={r.total === "end"} />
                        ) : (
                          <>
                            <Cell $align="left" $raise>{r.kind}</Cell>
                            <Cell />
                            <Cell />
                            <Cell $align="left" $raise>{r.species}</Cell>
                          </>
                        )}
                        {r.cells.map((v, i) => (
                          <Cell
                            key={i}
                            $align={alignOf(i, !!r.total)}
                            $bold={!!r.total}
                            $pink={!!r.total && i >= 7 && i <= 12}
                            $raise={i === 2 || i === 15 || n === rows.length - 1}
                          >
                            {v}
                          </Cell>
                        ))}
                      </tr>
                    ))}
                  </tbody>
                </DataTable>
                <Beyond />
                <FillHandle />
              </TableLine>
            </Cells>
          </SheetArea>
        </Grid>
        <VScroll>
          <Splitter />
          <ArrowPad><Arrow d="up" /></ArrowPad>
          <VThumb><Svg s={9}><path d="M0 1.500h9M0 4.500h9M0 7.500h9" stroke="#5d7db0" /></Svg></VThumb>
          <ArrowPad><Arrow d="down" /></ArrowPad>
        </VScroll>
      </Workbook>

      <SheetBar>
        <SheetNav>
          <SheetArrow end /><SheetArrow /><SheetArrow right /><SheetArrow end right />
        </SheetNav>
        <SheetTab $w={122}>SCHW004A bis-1</SheetTab>
        <SheetTab $w={129} $active>SCHW004A bis-2</SheetTab>
        <SheetTab $w={130} $slant>SCHW004A bis-3</SheetTab>
        <NewTab aria-label="New sheet"><NewSheet /></NewTab>
        <TabSpace />
        <Splitter $tall />
        <HScroll>
          <Arrow d="left" />
          <HThumb><Svg s={9}><path d="M1.500 0v9M3.500 0v9M5.500 0v9M7.500 0v9" stroke="#5d7db0" /></Svg></HThumb>
          <Arrow d="right" />
        </HScroll>
        <Splitter $tall />
        <ScrollCorner />
      </SheetBar>

      <StatusBar>
        <ReadyText>Έτοιμο</ReadyText>
        <CountText>Πλήθος: 21</CountText>
        <ViewButtons>
          {[0, 1, 2].map((k) => <ViewButton key={k} $on={k === 0} aria-label={`View ${k + 1}`}><ViewIcon k={k} /></ViewButton>)}
        </ViewButtons>
        <ZoomText>100%</ZoomText>
        <RoundButton aria-label="Zoom out"><Round /></RoundButton>
        <Zoom type="range" aria-label="Zoom" defaultValue={50} />
        <RoundButton aria-label="Zoom in"><Round plus /></RoundButton>
      </StatusBar>

      <TaskBar>
        <StartButton><Flag />έναρξη</StartButton>
        <Gutter><Grip /></Gutter>
        <QuickLaunch>
          <Firefox /><Calc /><Explorer /><Outlook /><Mail /><Word />
          <QuickMore>»</QuickMore>
        </QuickLaunch>
        <Grip />
        <TaskList>
          <TaskButton><Mail /><TaskText>Εισερχόμε...</TaskText></TaskButton>
          <TaskButton><Firefox /><TaskText>3 Firefox</TaskText><Caret c="#fff" /></TaskButton>
          <TaskButton><Word /><TaskText>INTRA-RE...</TaskText></TaskButton>
          <TaskButton><Folder /><TaskText>YLIKO GI...</TaskText></TaskButton>
          <TaskButton $on><Excel /><TaskText>Microsoft ...</TaskText></TaskButton>
        </TaskList>
        <Grip />
        <Language>EN</Language>
        <Tray><TrayArrow /><TrayAlert /><TrayNet /><Clock>1:23 μμ</Clock></Tray>
      </TaskBar>
    </Page>
  );
}
